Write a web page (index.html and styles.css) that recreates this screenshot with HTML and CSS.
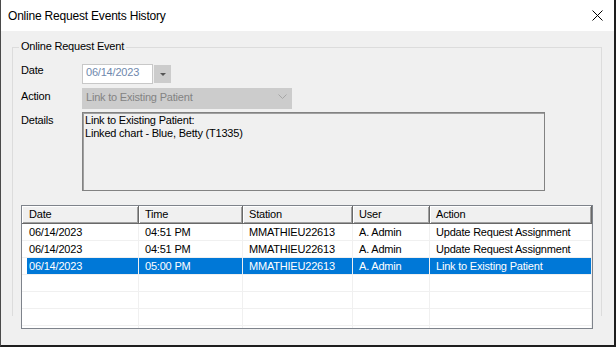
FILE: index.html
```html
<!DOCTYPE html>
<html lang="en">
<head>
    <meta charset="UTF-8">
    <title>Online Request Events History</title>
    <link rel="stylesheet" href="styles.css">
</head>
<body>
    <div class="window">
        <div class="titlebar">
            <span class="title">Online Request Events History</span>
            <svg class="close" width="11" height="11" viewBox="0 0 11 11">
                <path d="M0.5 0.5 L10.5 10.5 M10.5 0.5 L0.5 10.5" stroke="#000" stroke-width="1" fill="none"/>
            </svg>
        </div>
        <div class="client">
            <div class="group">
                <span class="legend">Online Request Event</span>
                <div class="form-row row-date">
                    <label class="lbl">Date</label>
                    <div class="date-box">06/14/2023</div>
                    <div class="date-btn"><span class="tri"></span></div>
                </div>
                <div class="form-row row-action">
                    <label class="lbl lbl-low">Action</label>
                    <div class="combo">
                        <span>Link to Existing Patient</span>
                        <svg width="9" height="5" viewBox="0 0 9 5">
                            <path d="M0.5 0.5 L4.5 4.5 L8.5 0.5" stroke="#a6a6a6" fill="none"/>
                        </svg>
                    </div>
                </div>
                <div class="form-row">
                    <label class="lbl lbl-low">Details</label>
                    <div class="details">Link to Existing Patient:<br>Linked chart - Blue, Betty (T1335)</div>
                </div>

                <div class="listview">
                    <div class="lv-head">
                        <div class="col c1">Date</div>
                        <div class="col c2">Time</div>
                        <div class="col c3">Station</div>
                        <div class="col c4">User</div>
                        <div class="col c5">Action</div>
                    </div>
                    <div class="lv-row">
                        <div class="col c1">06/14/2023</div>
                        <div class="col c2">04:51 PM</div>
                        <div class="col c3">MMATHIEU22613</div>
                        <div class="col c4">A. Admin</div>
                        <div class="col c5">Update Request Assignment</div>
                    </div>
                    <div class="lv-row">
                        <div class="col c1">06/14/2023</div>
                        <div class="col c2">04:51 PM</div>
                        <div class="col c3">MMATHIEU22613</div>
                        <div class="col c4">A. Admin</div>
                        <div class="col c5">Update Request Assignment</div>
                    </div>
                    <div class="lv-row selected">
                        <div class="col c1">06/14/2023</div>
                        <div class="col c2">05:00 PM</div>
                        <div class="col c3">MMATHIEU22613</div>
                        <div class="col c4">A. Admin</div>
                        <div class="col c5">Link to Existing Patient</div>
                    </div>
                    <div class="lv-row">
                        <div class="col c1"></div><div class="col c2"></div><div class="col c3"></div><div class="col c4"></div><div class="col c5"></div>
                    </div>
                    <div class="lv-row">
                        <div class="col c1"></div><div class="col c2"></div><div class="col c3"></div><div class="col c4"></div><div class="col c5"></div>
                    </div>
                    <div class="lv-row">
                        <div class="col c1"></div><div class="col c2"></div><div class="col c3"></div><div class="col c4"></div><div class="col c5"></div>
                    </div>
                    <div class="lv-row">
                        <div class="col c1"></div><div class="col c2"></div><div class="col c3"></div><div class="col c4"></div><div class="col c5"></div>
                    </div>
                </div>
            </div>
        </div>
    </div>
</body>
</html>
```
FILE: styles.css
```css
body {
    margin: 0;
    padding: 0;
    background-color: #3a3a3a;
    font-family: "Liberation Sans", Arial, sans-serif;
    font-size: 11px;
    letter-spacing: -0.2px;
    color: #000;
}
.window {
    width: 616px;
    height: 347px;
    box-sizing: border-box;
    border-left: 1px solid #4a4a4a;
    border-right: 2px solid #1e1e1e;
    border-bottom: 2px solid #1e1e1e;
    display: flex;
    flex-direction: column;
    background-color: #f0f0f0;
}
.titlebar {
    height: 31px;
    flex: none;
    background-color: #fff;
    display: flex;
    align-items: center;
    justify-content: space-between;
    padding: 0 11px 0 7px;
}
.title {
    font-size: 12px;
    letter-spacing: -0.2px;
    margin-top: 1px;
}
.close {
    display: block;
}
.client {
    flex: 1;
    padding: 16px 0 0 11px;
    overflow: hidden;
}
.group {
    position: relative;
    width: 590px;
    height: 269px;
    box-sizing: border-box;
    border: 1px solid #dcdcdc;
    border-bottom: none;
    padding: 16px 0 0 8px;
}
.legend {
    position: absolute;
    top: -8px;
    left: 6px;
    padding: 0 2px;
    line-height: 13px;
    background-color: #f0f0f0;
}
.form-row {
    display: flex;
    align-items: flex-start;
}
.row-date {
    margin-bottom: 4px;
}
.row-action {
    margin-bottom: 3px;
}
.lbl {
    width: 61px;
    flex: none;
    line-height: 13px;
}
.lbl-low {
    padding-top: 2px;
}
.date-box {
    width: 71px;
    height: 20px;
    box-sizing: border-box;
    border: 1px solid #c8c8c8;
    background-color: #fff;
    color: #6f88ad;
    line-height: 13px;
    padding: 1px 0 0 3px;
}
.date-btn {
    width: 17px;
    height: 18px;
    margin: 1px 0 0 1px;
    background-color: #cccccc;
    display: flex;
    align-items: center;
    justify-content: center;
}
.tri {
    width: 0;
    height: 0;
    border-left: 3px solid transparent;
    border-right: 3px solid transparent;
    border-top: 3px solid #555;
}
.combo {
    width: 210px;
    height: 21px;
    box-sizing: border-box;
    background-color: #cccccc;
    color: #838383;
    line-height: 13px;
    padding: 3px 5px 0 4px;
    display: flex;
    justify-content: space-between;
}
.combo svg {
    margin-top: 3px;
}
.details {
    width: 463px;
    height: 79px;
    box-sizing: border-box;
    border: 1px solid #828282;
    box-shadow: inset 1px 1px 0 #a0a0a0;
    line-height: 13px;
    padding: 1px 0 0 2px;
}
.listview {
    margin-top: 14px;
    width: 572px;
    height: 124px;
    box-sizing: border-box;
    border: 1px solid #7e838b;
    background-color: #fff;
    overflow: hidden;
}
.lv-head, .lv-row {
    display: flex;
}
.col {
    flex: none;
    box-sizing: border-box;
    line-height: 16px;
    padding-left: 6px;
    white-space: nowrap;
    overflow: hidden;
}
.c1 { width: 117px; padding-left: 7px; }
.c2 { width: 104px; }
.c3 { width: 110px; }
.c4 { width: 77px; }
.c5 { width: 162px; }
.lv-head .col {
    height: 18px;
    background-color: #f0f0f0;
    border-right: 1px solid #696969;
    border-bottom: 1px solid #696969;
    box-shadow: inset 1px 1px 0 #fff, inset -1px -1px 0 #a0a0a0;
}
.lv-row .col {
    height: 17px;
    border-right: 1px solid #f0f0f0;
    border-bottom: 1px solid #f0f0f0;
}
.lv-row.selected .col {
    background-color: #0078d7;
    color: #fff;
}
.lv-row.selected .c1 {
    box-shadow: inset 5px 0 0 #fff;
}
```
